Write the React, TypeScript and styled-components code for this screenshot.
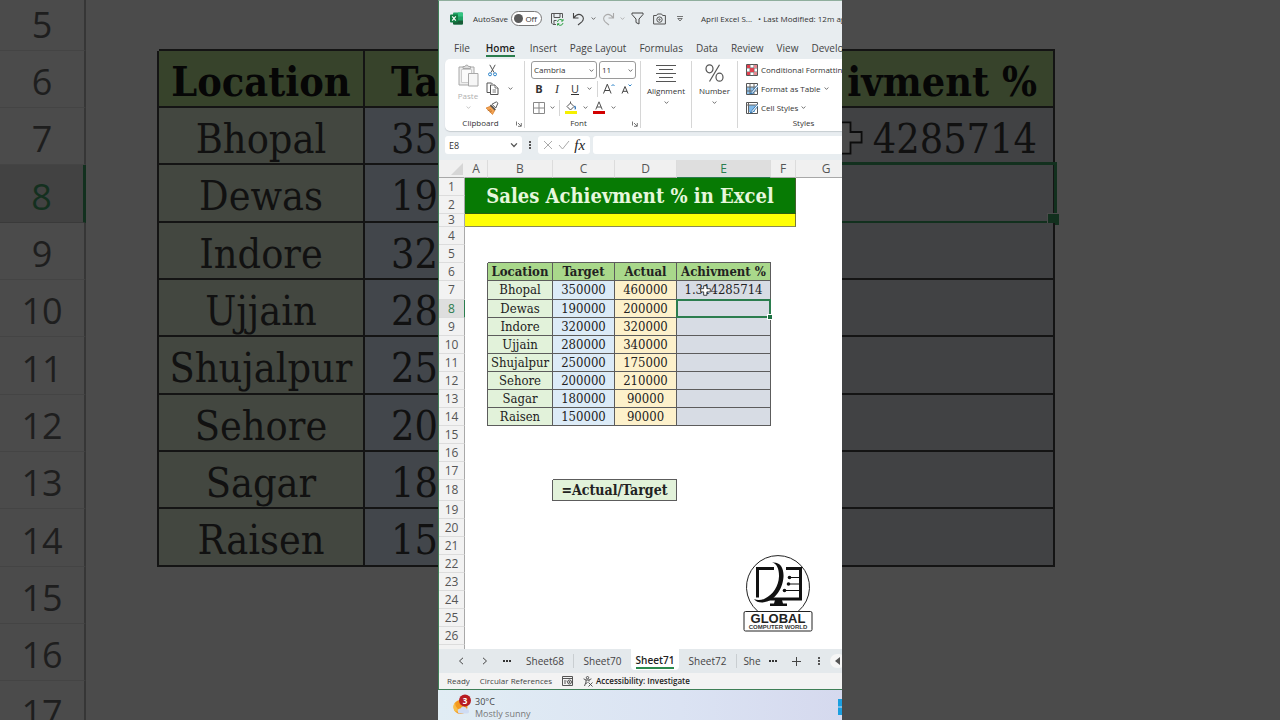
import React from 'react';
import styled, { createGlobalStyle, css } from 'styled-components';

const UI = '"Open Sans", "Noto Sans", sans-serif';
const SERIF = '"DejaVu Serif Condensed", "DejaVu Serif", serif';

const GlobalStyle = createGlobalStyle`
  * { box-sizing: border-box; }
  body { margin: 0; background: #4b4b4b; font-family: ${UI}; color: #333; overflow: hidden; }
  button, input, select { font: inherit; color: inherit; border: 0; padding: 0; margin: 0; background: none; }
  svg { display: block; flex: none; }
`;

/* ---------- frame ---------- */

const Page = styled.div`
  display: flex;
  height: 100vh;
  overflow: hidden;
`;

const Side = styled.aside`
  flex: 1;
  min-width: 0;
  overflow: hidden;
  background: #4b4b4b;
`;

const Phone = styled.main`
  height: 100vh;
  aspect-ratio: 101 / 180;
  flex: none;
  display: flex;
  flex-direction: column;
  overflow: hidden;
  background: #dfe9f2;
`;

const Workbook = styled.section`
  flex: 1;
  min-height: 0;
  display: flex;
  flex-direction: column;
  overflow: hidden;
  background: #e8edf0;
  border: 1px solid #3f7f57;
  border-right: 0;
  border-top-color: #8fae9d;
`;

/* ---------- enlarged sheet at the sides ---------- */

type Tone = 'head' | 'name' | 'blue' | 'grey' | 'none' | 'rowNo' | 'rowSel';

const filled = css`
  border-right: 2px solid #141414;
  border-bottom: 2px solid #141414;
`;

const tones: Record<Tone, ReturnType<typeof css>> = {
  head: css`${filled} background: #37432b; color: #060606; font-weight: 700;`,
  name: css`${filled} background: #434740; color: #111;`,
  blue: css`${filled} background: #42464b; color: #111;`,
  grey: css`${filled} background: #414244; color: #111;`,
  none: css``,
  rowNo: css`color: #1e1e1e; font: 36px/40px ${UI}; border-right: 2px solid #363636; border-bottom: 1px solid #444;`,
  rowSel: css`color: #14301f; background: #424242; font: 36px/40px ${UI}; border-right: 3px solid #12301e; border-bottom: 1px solid #3a3a3a;`,
};

const BigTable = styled.table<{ $width: string }>`
  table-layout: fixed;
  border-collapse: separate;
  border-spacing: 0;
  width: ${(p) => p.$width};
  margin-top: -7px;
  font: 41px/44px ${SERIF};
  text-align: center;
`;

const BigRow = styled.tr`
  height: 57px;
  &:nth-child(3n + 1) { height: 58px; }
`;

const BigCell = styled.td<{ $tone: Tone; $top?: boolean; $left?: boolean; $align?: 'left' | 'right' }>`
  position: relative;
  padding: 6px 0 0;
  white-space: nowrap;
  ${(p) => p.$top && css`border-bottom: 2px solid #141414;`}
  ${(p) => p.$left && css`border-right: 2px solid #141414;`}
  ${(p) => tones[p.$tone]}
  ${(p) => p.$align === 'left' && css`text-align: left; padding-left: 26px; border-right: 0;`}
  ${(p) => p.$align === 'right' && css`text-align: right; padding-right: 16px;`}
`;

const BigSelection = styled.span`
  position: absolute;
  inset: -3px -4px -3px 0;
  border: 3px solid #12301e;
  border-left: 0;
  &::after {
    content: '';
    position: absolute;
    right: -6px;
    bottom: -5px;
    width: 11px;
    height: 11px;
    background: #12301e;
    border: 1px solid #4b4b4b;
  }
`;

const BigPointer = styled.span`
  position: absolute;
  left: -14px;
  top: 12px;
`;

/* ---------- title bar ---------- */

const TitleBar = styled.header`
  height: 35px;
  flex: none;
  display: grid;
  grid-template-columns: 34px 38px 36px 20px 22px 8px 22px 6px 24px 20px 22px 10px max-content;
  align-items: center;
  justify-items: center;
  font-size: 8px;
  white-space: nowrap;
`;

const IconButton = styled.button`
  display: flex;
  align-items: center;
  justify-content: center;
`;

const AutoSaveLabel = styled.label`
  justify-self: start;
`;

const Switch = styled.span`
  position: relative;
  width: 31px;
  height: 15px;
  justify-self: start;
  display: flex;
  align-items: center;
  justify-content: flex-end;
  padding-right: 4px;
  border: 1px solid #777;
  border-radius: 8px;
  background: #fff;
  input {
    appearance: none;
    position: absolute;
    left: 2px;
    top: 2px;
    width: 9px;
    height: 9px;
    border-radius: 50%;
    background: #5a5a5a;
  }
`;

const DocName = styled.span`
  display: flex;
  gap: 6px;
  grid-column: 13;
`;

/* ---------- ribbon ---------- */

const Tabs = styled.nav`
  flex: none;
  height: 23px;
  display: flex;
  gap: 13px;
  padding: 5px 0 0 15px;
  font-size: 10px;
  line-height: 14px;
  white-space: nowrap;
`;

const Tab = styled.a<{ $active?: boolean }>`
  color: #444;
  text-decoration: none;
  height: 16px;
  ${(p) => p.$active && css`
    color: #222;
    font-weight: 600;
    margin: 0 2px 0 3px;
    border-bottom: 2px solid #2b7d4e;
  `}
`;

const Ribbon = styled.section`
  flex: none;
  height: 72px;
  margin-left: 6px;
  display: flex;
  background: #fff;
  border-radius: 5px 0 0 5px;
  box-shadow: 0 1px 1px #c6ccd0;
  font-size: 8px;
  line-height: 12px;
  padding: 2px 0 0;
`;

const Group = styled.div<{ $width: number }>`
  flex: none;
  width: ${(p) => p.$width}px;
  height: 67px;
  display: flex;
  flex-direction: column;
  justify-content: space-between;
  border-right: 1px solid #d6d6d6;
  white-space: nowrap;
`;

const GroupName = styled.div`
  position: relative;
  text-align: center;
  line-height: 10px;
  padding-right: 8px;
  button { position: absolute; right: 2px; top: 3px; }
`;

const ClipBody = styled.div`
  display: grid;
  grid-template-columns: 38px 18px 18px;
  height: 56px;
`;

const BigButton = styled.button<{ $muted?: boolean }>`
  display: flex;
  flex-direction: column;
  align-items: center;
  justify-content: flex-start;
  gap: 3px;
  padding-top: 3px;
  ${(p) => p.$muted && css`
    color: #b0b0b0;
    padding-left: 8px;
  `}
`;

const Stack = styled.div`
  display: grid;
  grid-template-rows: 18px 19px 19px;
  align-items: center;
  justify-items: center;
`;

const FontBody = styled.div`
  display: grid;
  grid-template-rows: 18px 19px 19px;
  padding-left: 6px;
`;

const FontRow = styled.div`
  display: flex;
  align-items: center;
  gap: 2px;
`;

const SelectBox = styled.span<{ $width: number }>`
  position: relative;
  width: ${(p) => p.$width}px;
  height: 18px;
  border: 1px solid #9a9a9a;
  border-radius: 3px;
  display: flex;
  align-items: center;
  select { appearance: none; width: 100%; height: 16px; padding-left: 2px; outline: 0; }
  svg { position: absolute; right: 2px; top: 6px; pointer-events: none; }
`;

const Tool = styled.button<{ $width: number }>`
  width: ${(p) => p.$width}px;
  height: 16px;
  display: flex;
  align-items: center;
  justify-content: center;
  font-size: 11px;
  line-height: 14px;
`;

const ItalicTool = styled(Tool)`
  font-family: "Liberation Serif", serif;
  font-style: italic;
  font-size: 12px;
`;

const Rule = styled.span`
  width: 1px;
  height: 16px;
  margin: 0 1px;
  background: #d6d6d6;
`;

const StylesBody = styled.div`
  display: grid;
  grid-template-rows: 18px 19px 19px;
  padding-left: 8px;
  button { display: flex; align-items: center; gap: 3px; }
`;

/* ---------- formula bar ---------- */

const FormulaBar = styled.div`
  flex: none;
  display: flex;
  align-items: center;
  height: 18px;
  margin: 5px 0 6px 6px;
  font-size: 9px;
`;

const NameBox = styled.div`
  width: 77px;
  height: 18px;
  display: flex;
  align-items: center;
  background: #fff;
  border-radius: 3px;
  padding: 0 4px;
  input { flex: 1; min-width: 0; outline: 0; }
`;

const Dots = styled.span`
  width: 16px;
  display: flex;
  justify-content: center;
`;

const FxBox = styled.div`
  width: 52px;
  height: 18px;
  display: flex;
  align-items: center;
  justify-content: space-evenly;
  background: #fff;
  border-radius: 3px;
`;

const FxButton = styled.button`
  font: italic 15px/16px "Liberation Serif", serif;
  color: #222;
`;

const FormulaInput = styled.input`
  flex: 1;
  height: 18px;
  min-width: 0;
  margin-left: 3px;
  background: #fff;
  border-radius: 3px 0 0 3px;
  outline: 0;
`;

/* ---------- grid ---------- */

const GridArea = styled.div`
  position: relative;
  flex: 1;
  min-height: 0;
  overflow: hidden;
  background: #fff;
`;

const Sheet = styled.table`
  table-layout: fixed;
  border-collapse: separate;
  border-spacing: 0;
  width: 418px;
  text-align: center;
  font: 13px/16px ${SERIF};
  color: #222;
`;

const ColHead = styled.th<{ $active?: boolean }>`
  height: 18px;
  padding: 0;
  font: 12px/16px ${UI};
  color: #555;
  background: #f0f0f0;
  border-right: 1px solid #dcdcdc;
  border-bottom: 1px solid #a8a8a8;
  ${(p) => p.$active && css`
    background: #dedede;
    color: #2b7d4e;
    border-bottom-color: #2b7d4e;
  `}
`;

const Corner = styled(ColHead)`
  border-right-color: #f0f0f0;
  svg { margin: 1px 1px 0 auto; }
`;

const RowHead = styled.th<{ $active?: boolean }>`
  padding: 0;
  overflow: hidden;
  font: 12px/12px ${UI};
  color: #555;
  background: #f2f2f2;
  border-right: 1px solid #a8a8a8;
  border-bottom: 1px solid #dcdcdc;
  ${(p) => p.$active && css`
    background: #dedede;
    color: #2b7d4e;
    border-right-color: #2b7d4e;
  `}
`;

const Row = styled.tr<{ $h: number }>`
  height: ${(p) => p.$h}px;
`;

type Fill = 'head' | 'name' | 'target' | 'actual' | 'result';

const fills: Record<Fill, string> = {
  head: '#a9d88b',
  name: '#e2f2da',
  target: '#dcebf7',
  actual: '#fdf1cb',
  result: '#d7dce4',
};

const Cell = styled.td<{ $fill?: Fill; $edge?: 'right' | 'bottom' }>`
  position: relative;
  padding: 0;
  white-space: nowrap;
  ${(p) => p.$fill && css`
    background: ${fills[p.$fill]};
    border-right: 1px solid #5c5c5c;
    border-bottom: 1px solid #5c5c5c;
    font-weight: ${p.$fill === 'head' ? 700 : 400};
  `}
  ${(p) => p.$edge && css`border-${p.$edge}: 1px solid #5c5c5c;`}
`;

const Banner = styled.td`
  padding: 0;
  background: #077a04;
  color: #e6f7dc;
  border-right: 1px solid #44612f;
  border-bottom: 1px solid #2c5d12;
  font: 700 20px/32px ${SERIF};
  white-space: nowrap;
`;

const Stripe = styled.td`
  padding: 0;
  background: #ffff05;
  border-right: 1px solid #77773a;
  border-bottom: 1px solid #8a8a55;
`;

const FormulaNote = styled(Cell)`
  font-size: 14px;
  font-weight: 700;
`;

const Selection = styled.span`
  position: absolute;
  z-index: 1;
  inset: -1px;
  border: 2px solid #2b7d4e;
  &::after {
    content: '';
    position: absolute;
    right: -3px;
    bottom: -3px;
    width: 4px;
    height: 4px;
    background: #1f7244;
    outline: 1px solid #fff;
  }
`;

const Pointer = styled.span`
  position: absolute;
  left: 23px;
  top: 4px;
`;

const Brand = styled.div`
  position: absolute;
  right: 29px;
  bottom: 17px;
`;

/* ---------- bottom bars ---------- */

const SheetTabs = styled.nav`
  flex: none;
  height: 24px;
  display: grid;
  grid-template-columns: 10px 24px 24px 20px 57px 57px 48px 58px 30px 12px 34px 12px 25px;
  align-items: center;
  justify-items: center;
  background: #e4e9ec;
  font-size: 10px;
  line-height: 14px;
  color: #444;
  white-space: nowrap;
`;

const SheetTab = styled.button<{ $active?: boolean; $line?: boolean }>`
  width: 100%;
  border-right: ${(p) => (p.$line ? '1px solid #c9ced1' : '0')};
  ${(p) => p.$active && css`
    align-self: start;
    height: 21px;
    padding-top: 3px;
    background: #fff;
    border-radius: 0 0 4px 4px;
    color: #222;
    font-weight: 600;
    span { display: inline-block; border-bottom: 2px solid #2b8a4e; }
  `}
`;

const ScrollLeft = styled.button`
  width: 16px;
  height: 14px;
  border-radius: 7px;
  background: #f6f6f6;
  display: flex;
  align-items: center;
  justify-content: center;
`;

const StatusBar = styled.footer`
  flex: none;
  height: 16px;
  display: flex;
  align-items: center;
  gap: 10px;
  padding-left: 8px;
  background: #f3f3f3;
  font-size: 8px;
  line-height: 12px;
  white-space: nowrap;
  color: #444;
`;

const AccessItem = styled.button`
  display: flex;
  align-items: center;
  gap: 3px;
  font-weight: 600;
  color: #222;
`;

const Taskbar = styled.footer`
  flex: none;
  height: 30px;
  display: flex;
  align-items: flex-start;
  justify-content: space-between;
  background: linear-gradient(90deg, #e1edf4, #dbe3f3 60%, #d5d9ee);
`;

const Weather = styled.div`
  display: flex;
  gap: 3px;
  padding: 4px 0 0 14px;
  font-size: 9px;
  line-height: 12px;
  color: #444;
  p { margin: 2px 0 0; }
  p + p { margin: 0; color: #777; }
`;

const WinButton = styled.button`
  width: 4px;
  margin-top: 9px;
  overflow: hidden;
`;

/* ---------- drawings ---------- */

const Chevron = ({ w = 5, color = '#555' }: { w?: number; color?: string }) => (
  <svg width={w} height={w} viewBox="0 0 6 6" fill="none" stroke={color} strokeWidth="1">
    <path d="M.8 1.8 3 4.1 5.2 1.8" />
  </svg>
);

const ExcelLogo = () => (
  <svg width="13" height="13" viewBox="0 0 13 13">
    <rect x="3" y="0.5" width="10" height="12" rx="1" fill="#21a366" />
    <path d="M8 .5h4a1 1 0 0 1 1 1v3H8z" fill="#33c481" />
    <path d="M3 8.5h10v3a1 1 0 0 1-1 1H4a1 1 0 0 1-1-1z" fill="#185c37" />
    <rect x="0" y="2.5" width="8" height="8" rx="1" fill="#107c41" />
    <path d="M2.2 4.4l3.6 4.2M5.8 4.4L2.2 8.6" stroke="#fff" strokeWidth="1.2" />
  </svg>
);

const SaveIcon = () => (
  <svg width="14" height="14" viewBox="0 0 14 14" fill="none" stroke="#555">
    <path d="M6 12.5H3L1.5 11V1.500h11V6M4 1.500v4h6v-4M4 12.500v-4h2.500" />
    <path d="M7.500 10a2.800 2.800 0 0 1 5-1.500M13 7v2h-2M13 11a2.800 2.800 0 0 1-5 1.200M7.500 13.500v-1.800h1.800" stroke="#2ea043" />
  </svg>
);

const UndoIcon = ({ flip, color = '#444' }: { flip?: boolean; color?: string }) => (
  <svg width="13" height="14" viewBox="0 0 13 14" fill="none" stroke={color} strokeWidth="1.100">
    <g transform={flip ? 'matrix(-1 0 0 1 13 0)' : undefined}>
      <path d="M1.500 1v5h5M1.800 5.800C4 2.800 7 1.600 9.500 3.200c2.600 1.800 2.300 4.800.3 6.600L6 13" />
    </g>
  </svg>
);

const FunnelIcon = () => (
  <svg width="13" height="13" viewBox="0 0 13 13" fill="none" stroke="#444">
    <path d="M1 1h11v1.500L8 7v5L5 10.500V7L1 2.500z" />
  </svg>
);

const CameraIcon = () => (
  <svg width="13" height="12" viewBox="0 0 13 12" fill="none" stroke="#555">
    <path d="M.6 2.500h3l1-1.500h4l1 1.500h2.800v8.500H.6z" />
    <circle cx="6.500" cy="6.600" r="2.700" />
    <circle cx="6.500" cy="6.600" r="0.700" />
  </svg>
);

const PasteIcon = () => (
  <svg width="21" height="23" viewBox="0 0 21 23" fill="#eee" stroke="#a8a8a8">
    <path d="M1 3h15v18H1z" />
    <path d="M3.500 5.500h10v13h-10z" fill="#fafafa" stroke="#ccc" />
    <path d="M5 4.500V2.500h2a1.800 1.800 0 0 1 3.500 0h2v2z" fill="#ddd" />
    <path d="M10.500 9.500h9.500v12.500h-9.500z" fill="#f6f6f6" />
  </svg>
);

const CutIcon = () => (
  <svg width="9" height="13" viewBox="0 0 9 13" fill="none">
    <path d="M1.800.8 6 8.500M7.200.8 3 8.500" stroke="#555" />
    <circle cx="2" cy="10.300" r="1.500" stroke="#2a82c9" />
    <circle cx="7" cy="10.300" r="1.500" stroke="#2a82c9" />
  </svg>
);

const CopyIcon = () => (
  <svg width="13" height="13" viewBox="0 0 13 13" fill="#fff" stroke="#555">
    <path d="M4 10.500H1V1h4.500l1 1" />
    <path d="M4.500 3h4.500l3 3v6.500h-7.500z" />
    <path d="M9 3v3h3M6.500 8h3.500M6.500 10h3.500" strokeWidth=".8" />
  </svg>
);

const PainterIcon = () => (
  <svg width="14" height="14" viewBox="0 0 13 13" fill="none">
    <path d="M1 6.500l5-2 3.500 3.500-2.500 4.500z" fill="#f3a353" stroke="#d47b2a" strokeWidth=".7" />
    <path d="M2.500 9l3-1M4.500 10.500l2-1.500" stroke="#a85d1c" strokeWidth=".6" />
    <path d="M5 3.800l4.500 4.500" stroke="#555" strokeWidth="1.500" />
    <path d="M6.500 3l4-2.200 1.500 1.200-2 4.500z" fill="#fff" stroke="#555" strokeWidth=".9" />
  </svg>
);

const LauncherIcon = () => (
  <svg width="6" height="6" viewBox="0 0 6 6" fill="none" stroke="#555" strokeWidth=".8">
    <path d="M.5 4.500v-4M2 2l3 3M5.300 2v3.300H2" />
  </svg>
);

const BordersIcon = () => (
  <svg width="12" height="12" viewBox="0 0 12 12" fill="none" stroke="#888">
    <path d="M.5.5h11v11H.5zM6 .5v11M.5 6h11" />
  </svg>
);

const FillIcon = () => (
  <svg width="12" height="13" viewBox="0 0 12 13" fill="none">
    <path d="M2 5.500 5.500 2l3.500 3.500-3.500 3.500z" stroke="#555" fill="#fff" />
    <path d="M5.500 2V.5" stroke="#555" />
    <path d="M9.500 5c1.300 1.800 1 3 .2 3" stroke="#2a6fb5" strokeWidth="1.300" />
    <rect y="10" width="12" height="3" fill="#f5f000" />
  </svg>
);

const FontColorIcon = () => (
  <svg width="12" height="13" viewBox="0 0 12 13" fill="none">
    <path d="M2.800 8.500 6 .8l3.200 7.700M3.900 6h4.200" stroke="#555" />
    <rect y="10" width="12" height="3" fill="#d20000" />
  </svg>
);

const SizeIcon = ({ small }: { small?: boolean }) => (
  <svg width="12" height="12" viewBox="0 0 12 12" fill="none">
    {small ? (
      <>
        <path d="M1 10.500 4 3.500 7 10.500M2 8.300h4" stroke="#444" />
        <path d="M7.500 1.500 9 3l1.500-1.500" stroke="#2a82c9" />
      </>
    ) : (
      <>
        <path d="M.5 10.500 4.300 1.200l3.800 9.300M1.800 7.500h5" stroke="#444" />
        <path d="M8.500 3 10 1.500 11.500 3" stroke="#2a82c9" />
      </>
    )}
  </svg>
);

const AlignIcon = () => (
  <svg width="20" height="18" viewBox="0 0 20 18" stroke="#555">
    <path d="M0 1.500h20M3 5.500h14M0 9.500h20M3 13.500h14M0 17.500h20" />
  </svg>
);

const PercentIcon = () => (
  <svg width="19" height="18" viewBox="0 0 19 18" fill="none" stroke="#555" strokeWidth="1.200">
    <ellipse cx="4.500" cy="4.800" rx="3.500" ry="4" />
    <ellipse cx="14.500" cy="13.200" rx="3.500" ry="4" />
    <path d="M14.500.8 4.500 17.500" />
  </svg>
);

const StyleIcon = ({ kind }: { kind: 'cond' | 'table' | 'cell' }) => (
  <svg width="12" height="12" viewBox="0 0 12 12" fill="none">
    <path d="M.5.5h11v11H.5z" fill="#fff" stroke="#555" />
    {kind === 'cond' && (
      <>
        <path d="M4 .5v11M8 .5v11M.5 4h11M.5 8h11" stroke="#777" />
        <path d="M1 1h3v3H1zM4 4h4v4H4zM1 8h3v3H1z" fill="#e0404f" />
        <path d="M8 1h3v3H8zM8 8h3v3H8z" fill="#e58a92" />
      </>
    )}
    {kind === 'table' && (
      <>
        <path d="M1 4h7v7H1z" fill="#8ec2ec" />
        <path d="M4 .5v11M8 .5v11M.5 4h11M.5 8h11" stroke="#666" />
      </>
    )}
    {kind === 'cell' && (
      <>
        <path d="M2 3h7v7H2z" fill="#7fb9ea" />
        <path d="M.5 3h11M2.500.5v11" stroke="#666" />
      </>
    )}
    {kind !== 'cond' && <path d="M11.500 2 6 8.500l-2 2.500 3-1 5-6" fill="#fff" stroke="#2f6fa8" strokeWidth=".9" />}
  </svg>
);

const CrossPointer = ({ size, dark }: { size: number; dark?: boolean }) => (
  <svg width={size} height={size} viewBox="0 0 12 12">
    <path d="M4 .8h3.500V4h3.700v3.500H7.500v3.700H4V7.500H.8V4H4z" fill={dark ? '#4b4b4b' : '#fff'} stroke={dark ? '#0c0c0c' : '#222'} strokeWidth={dark ? 0.6 : 0.9} />
  </svg>
);

const BrandLogo = () => (
  <svg width="70" height="77" viewBox="0 -3 70 77" fill="none">
    <path d="M14.500 53A31.500 31.500 0 1 1 55.500 53" stroke="#222" />
    <rect x="1" y="53.500" width="68" height="19.500" rx="1.500" stroke="#222" />
    <path d="M31 10.500H14.500v29M25 41h32.500V10.500H43" stroke="#111" strokeWidth="3" />
    <path d="M29 4.500c8-1 12 5 11.500 14.500C39.500 33 30 44 19 44.500c-3.500 0-6.500-1-8-3.500 3 1.500 7 1.500 11-.5 8-4 13.500-12 14-22 .2-7-2-13-7-14z" fill="#111" />
    <path d="M32 42h7l1 3.500h4v2.500H27v-2.500h4z" fill="#111" />
    <path d="M47 19.500h9M46 26h10M42 32.500h14" stroke="#111" />
    <circle cx="46.500" cy="19.500" r="1.800" fill="#111" />
    <circle cx="45.500" cy="26" r="1.800" fill="#111" />
    <circle cx="41.500" cy="32.500" r="1.800" fill="#111" />
    <text x="35" y="64.500" textAnchor="middle" fontFamily='"Liberation Sans", sans-serif' fontWeight="700" fontSize="13" fill="#222">GLOBAL</text>
    <text x="35" y="71" textAnchor="middle" fontFamily='"Liberation Sans", sans-serif' fontWeight="700" fontSize="6" fill="#333">COMPUTER WORLD</text>
  </svg>
);

const WeatherIcon = () => (
  <svg width="20" height="22" viewBox="0 0 20 22">
    <circle cx="8.500" cy="13" r="7" fill="#f39a1f" />
    <path d="M3 17.500a7 7 0 0 1 0-9 9 9 0 0 0 9 9z" fill="#f8bf49" />
    <path d="M8 19.500a2.500 2.500 0 0 1 .5-5 3.500 3.500 0 0 1 6.500.8 2.100 2.100 0 0 1 0 4.200z" fill="#cfdcf3" />
    <circle cx="13" cy="6.500" r="6" fill="#b81c22" />
    <text x="13" y="9.500" textAnchor="middle" fontFamily={UI} fontSize="8" fontWeight="700" fill="#fff">3</text>
  </svg>
);

const MacroIcon = () => (
  <svg width="11" height="10" viewBox="0 0 11 10" fill="none" stroke="#555">
    <path d="M.5.5h10v9H.5zM.5 2.500h10M2 5h2.500M2 7h2" />
    <circle cx="7.500" cy="6" r="2" fill="#fff" />
    <circle cx="7.500" cy="6" r=".6" fill="#555" />
  </svg>
);

const AccessIcon = () => (
  <svg width="10" height="11" viewBox="0 0 10 11" fill="none" stroke="#444" strokeWidth=".9">
    <circle cx="4.500" cy="1.700" r="1.200" />
    <path d="M.6 2.800 3 4v2L1.500 10M8.400 2.800 6 4v1.500M3 4h3M3 7.500l1.500-1M5.500 6.500l4 4M9.500 6.500l-4 4" />
  </svg>
);

const EllipsisIcon = () => (
  <svg width="8" height="2" viewBox="0 0 8 2" fill="#333"><path d="M0 0h2v2H0zM3 0h2v2H3zM6 0h2v2H6z" /></svg>
);

const DotsIcon = () => (
  <svg width="2" height="8" viewBox="0 0 2 8" fill="#555"><path d="M0 0h2v2H0zM0 3h2v2H0zM0 6h2v2H0z" /></svg>
);

/* ---------- data ---------- */

const data: [number, string, string, string, string][] = [
  [7, 'Bhopal', '350000', '460000', '1.314285714'],
  [8, 'Dewas', '190000', '200000', ''],
  [9, 'Indore', '320000', '320000', ''],
  [10, 'Ujjain', '280000', '340000', ''],
  [11, 'Shujalpur', '250000', '175000', ''],
  [12, 'Sehore', '200000', '210000', ''],
  [13, 'Sagar', '180000', '90000', ''],
  [14, 'Raisen', '150000', '90000', ''],
];

const columns = [26, 23, 65, 62, 62, 94, 25, 61];
const letters = [...'ABCDEFG'];
const tabs = ['File', 'Home', 'Insert', 'Page Layout', 'Formulas', 'Data', 'Review', 'View', 'Developer'];

const EmptyRow = ({ n, edges = '' }: { n?: number; edges?: string }) => (
  <Row $h={18}>
    <RowHead scope="row">{n}</RowHead>
    {letters.map((c) => <Cell key={c} $edge={edges.includes(c) ? 'bottom' : undefined} />)}
  </Row>
);

const LeftBackdrop = () => (
  <BigTable $width="100%">
    <colgroup><col width={86} /><col width={73} /><col width={206} /><col /></colgroup>
    <tbody>
      <BigRow>
        <BigCell $tone="rowNo">5</BigCell><BigCell $tone="none" />
        <BigCell $tone="none" $top /><BigCell $tone="none" $top />
      </BigRow>
      <BigRow>
        <BigCell $tone="rowNo">6</BigCell><BigCell $tone="none" $left />
        <BigCell $tone="head">Location</BigCell><BigCell $tone="head" $align="left">Ta</BigCell>
      </BigRow>
      {data.map(([n, name, target]) => (
        <BigRow key={n}>
          <BigCell $tone={n === 8 ? 'rowSel' : 'rowNo'}>{n}</BigCell><BigCell $tone="none" $left />
          <BigCell $tone="name">{name}</BigCell><BigCell $tone="blue" $align="left">{target.slice(0, 2)}</BigCell>
        </BigRow>
      ))}
      {[15, 16, 17].map((n) => (
        <BigRow key={n}>
          <BigCell $tone="rowNo">{n}</BigCell><BigCell $tone="none" colSpan={3} />
        </BigRow>
      ))}
    </tbody>
  </BigTable>
);

const RightBackdrop = () => (
  <BigTable $width="213px">
    <tbody>
      <BigRow><BigCell $tone="none" $top /></BigRow>
      <BigRow><BigCell $tone="head" $align="right">ivment %</BigCell></BigRow>
      {data.map(([n, , , , result]) => (
        <BigRow key={n}>
          <BigCell $tone="grey" $align="right">
            {result.slice(-7)}
            {n === 7 && <BigPointer><CrossPointer size={36} dark /></BigPointer>}
            {n === 8 && <BigSelection />}
          </BigCell>
        </BigRow>
      ))}
    </tbody>
  </BigTable>
);

export default function App() {
  return (
    <>
      <GlobalStyle />
      <Page>
        <Side aria-hidden="true"><LeftBackdrop /></Side>
        <Phone>
          <Workbook>
            <TitleBar>
              <ExcelLogo />
              <AutoSaveLabel htmlFor="autosave">AutoSave</AutoSaveLabel>
              <Switch><input id="autosave" type="checkbox" />Off</Switch>
              <IconButton aria-label="Save"><SaveIcon /></IconButton>
              <IconButton aria-label="Undo"><UndoIcon /></IconButton>
              <IconButton aria-label="Undo list"><Chevron /></IconButton>
              <IconButton aria-label="Redo"><UndoIcon flip color="#aaa" /></IconButton>
              <IconButton aria-label="Redo list"><Chevron color="#aaa" /></IconButton>
              <IconButton aria-label="Filter"><FunnelIcon /></IconButton>
              <IconButton aria-label="Camera"><CameraIcon /></IconButton>
              <IconButton aria-label="Customize toolbar">
                <svg width="6" height="6" viewBox="0 0 6 6" fill="none" stroke="#555" strokeWidth=".8"><path d="M0 .5h6M.8 2.500 3 5l2.200-2.500z" /></svg>
              </IconButton>
              <DocName><span>April Excel S...</span><span>• Last Modified: 12m ago</span></DocName>
            </TitleBar>

            <Tabs>
              {tabs.map((t) => <Tab key={t} href="#" $active={t === 'Home'}>{t}</Tab>)}
            </Tabs>

            <Ribbon>
              <Group $width={80}>
                <ClipBody>
                  <BigButton $muted><PasteIcon /><span>Paste</span><Chevron color="#bbb" /></BigButton>
                  <Stack>
                    <IconButton aria-label="Cut"><CutIcon /></IconButton>
                    <IconButton aria-label="Copy"><CopyIcon /></IconButton>
                    <IconButton aria-label="Format painter"><PainterIcon /></IconButton>
                  </Stack>
                  <Stack><span /><IconButton aria-label="Copy options"><Chevron /></IconButton></Stack>
                </ClipBody>
                <GroupName>Clipboard<button aria-label="Clipboard settings"><LauncherIcon /></button></GroupName>
              </Group>

              <Group $width={116}>
                <FontBody>
                  <FontRow>
                    <SelectBox $width={66}><select aria-label="Font"><option>Cambria</option></select><Chevron /></SelectBox>
                    <SelectBox $width={37}><select aria-label="Font size"><option>11</option></select><Chevron /></SelectBox>
                  </FontRow>
                  <FontRow>
                    <Tool $width={16}><b>B</b></Tool>
                    <ItalicTool $width={16}>I</ItalicTool>
                    <Tool $width={16}><u>U</u></Tool>
                    <Tool $width={9} aria-label="Underline options"><Chevron /></Tool>
                    <Rule />
                    <Tool $width={16} aria-label="Grow font"><SizeIcon /></Tool>
                    <Tool $width={16} aria-label="Shrink font"><SizeIcon small /></Tool>
                  </FontRow>
                  <FontRow>
                    <Tool $width={15} aria-label="Borders"><BordersIcon /></Tool>
                    <Tool $width={8} aria-label="Border options"><Chevron /></Tool>
                    <Rule />
                    <Tool $width={16} aria-label="Fill color"><FillIcon /></Tool>
                    <Tool $width={8} aria-label="Fill options"><Chevron /></Tool>
                    <Tool $width={16} aria-label="Font color"><FontColorIcon /></Tool>
                    <Tool $width={8} aria-label="Font color options"><Chevron /></Tool>
                  </FontRow>
                </FontBody>
                <GroupName>Font<button aria-label="Font settings"><LauncherIcon /></button></GroupName>
              </Group>

              <Group $width={51}>
                <BigButton><AlignIcon /><span>Alignment</span><Chevron /></BigButton>
              </Group>
              <Group $width={46}>
                <BigButton><PercentIcon /><span>Number</span><Chevron /></BigButton>
              </Group>
              <Group $width={140}>
                <StylesBody>
                  <button><StyleIcon kind="cond" />Conditional Formatting</button>
                  <button><StyleIcon kind="table" />Format as Table <Chevron /></button>
                  <button><StyleIcon kind="cell" />Cell Styles <Chevron /></button>
                </StylesBody>
                <GroupName>Styles</GroupName>
              </Group>
            </Ribbon>

            <FormulaBar>
              <NameBox><input aria-label="Name box" defaultValue="E8" /><Chevron w={8} /></NameBox>
              <Dots><DotsIcon /></Dots>
              <FxBox>
                <IconButton aria-label="Cancel"><svg width="10" height="10" viewBox="0 0 10 10" stroke="#aaa"><path d="M1 1l8 8M9 1 1 9" /></svg></IconButton>
                <IconButton aria-label="Enter"><svg width="12" height="10" viewBox="0 0 12 10" fill="none" stroke="#aaa"><path d="M1 5l3.500 4L11 1" /></svg></IconButton>
                <FxButton>fx</FxButton>
              </FxBox>
              <FormulaInput aria-label="Formula" />
            </FormulaBar>

            <GridArea>
              <Sheet>
                <colgroup>{columns.map((w, i) => <col key={i} width={w} />)}</colgroup>
                <thead>
                  <tr>
                    <Corner aria-label="Select all"><svg width="12" height="12" viewBox="0 0 12 12"><path d="M12 0v12H0z" fill="#d6d6d6" /></svg></Corner>
                    {letters.map((c) => <ColHead key={c} scope="col" $active={c === 'E'}>{c}</ColHead>)}
                  </tr>
                </thead>
                <tbody>
                  <Row $h={18}>
                    <RowHead scope="row">1</RowHead>
                    <Banner colSpan={6} rowSpan={2}>Sales Achievment % in Excel</Banner>
                    <Cell />
                  </Row>
                  <Row $h={18}><RowHead scope="row">2</RowHead><Cell /></Row>
                  <Row $h={12}><RowHead scope="row">3</RowHead><Stripe colSpan={6} /><Cell /></Row>
                  <EmptyRow n={4} />
                  <EmptyRow n={5} edges="BCDE" />
                  <Row $h={18}>
                    <RowHead scope="row">6</RowHead>
                    <Cell $edge="right" />
                    <Cell $fill="head">Location</Cell>
                    <Cell $fill="head">Target</Cell>
                    <Cell $fill="head">Actual</Cell>
                    <Cell $fill="head">Achivment %</Cell>
                    <Cell colSpan={2} />
                  </Row>
                  {data.map(([n, name, target, actual, result]) => (
                    <Row key={n} $h={n === 7 ? 19 : 18}>
                      <RowHead scope="row" $active={n === 8}>{n}</RowHead>
                      <Cell $edge="right" />
                      <Cell $fill="name">{name}</Cell>
                      <Cell $fill="target">{target}</Cell>
                      <Cell $fill="actual">{actual}</Cell>
                      <Cell $fill="result">
                        {result}
                        {n === 7 && <Pointer><CrossPointer size={11} /></Pointer>}
                        {n === 8 && <Selection />}
                      </Cell>
                      <Cell colSpan={2} />
                    </Row>
                  ))}
                  <EmptyRow n={15} />
                  <EmptyRow n={16} />
                  <EmptyRow n={17} edges="CD" />
                  <Row $h={21}>
                    <RowHead scope="row">18</RowHead>
                    <Cell />
                    <Cell $edge="right" />
                    <FormulaNote $fill="name" colSpan={2}>=Actual/Target</FormulaNote>
                    <Cell colSpan={3} />
                  </Row>
                  {[19, 20, 21, 22, 23, 24, 25, 26].map((n) => <EmptyRow key={n} n={n} />)}
                  <EmptyRow />
                </tbody>
              </Sheet>
              <Brand><BrandLogo /></Brand>
            </GridArea>

            <SheetTabs>
              <span />
              <IconButton aria-label="Previous sheet"><svg width="6" height="8" viewBox="0 0 6 8" fill="none" stroke="#444"><path d="M5 .8 1.500 4 5 7.200" /></svg></IconButton>
              <IconButton aria-label="Next sheet"><svg width="6" height="8" viewBox="0 0 6 8" fill="none" stroke="#444"><path d="M1 .8 4.500 4 1 7.200" /></svg></IconButton>
              <IconButton aria-label="More sheets"><EllipsisIcon /></IconButton>
              <SheetTab $line>Sheet68</SheetTab>
              <SheetTab>Sheet70</SheetTab>
              <SheetTab $active><span>Sheet71</span></SheetTab>
              <SheetTab $line>Sheet72</SheetTab>
              <SheetTab>She</SheetTab>
              <IconButton aria-label="All sheets"><EllipsisIcon /></IconButton>
              <IconButton aria-label="New sheet"><svg width="9" height="9" viewBox="0 0 9 9" stroke="#444"><path d="M4.500 0v9M0 4.500h9" /></svg></IconButton>
              <IconButton aria-label="Resize"><DotsIcon /></IconButton>
              <ScrollLeft aria-label="Scroll left"><svg width="5" height="8" viewBox="0 0 5 8"><path d="M5 0v8L0 4z" fill="#555" /></svg></ScrollLeft>
            </SheetTabs>

            <StatusBar>
              <span>Ready</span>
              <span>Circular References</span>
              <MacroIcon />
              <AccessItem><AccessIcon />Accessibility: Investigate</AccessItem>
            </StatusBar>
          </Workbook>

          <Taskbar>
            <Weather>
              <WeatherIcon />
              <div><p>30°C</p><p>Mostly sunny</p></div>
            </Weather>
            <WinButton aria-label="Start">
              <svg width="16" height="16" viewBox="0 0 16 16" fill="#1b9fe0"><path d="M0 0h7.500v7.500H0zM8.500 0H16v7.500H8.500zM0 8.500h7.500V16H0zM8.500 8.500H16V16H8.500z" /></svg>
            </WinButton>
          </Taskbar>
        </Phone>
        <Side aria-hidden="true"><RightBackdrop /></Side>
      </Page>
    </>
  );
}
